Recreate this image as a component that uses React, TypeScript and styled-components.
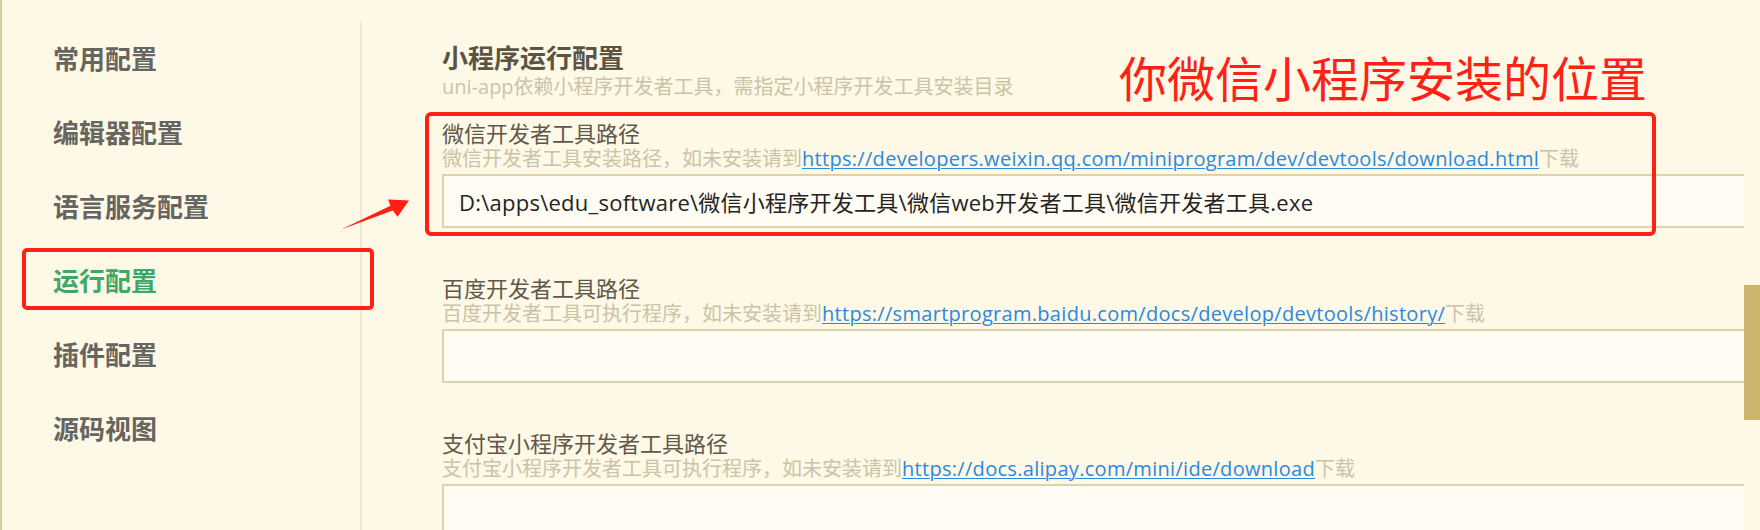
import React from "react";
import styled, { createGlobalStyle } from "styled-components";

const GlobalStyle = createGlobalStyle`
  html, body {
    margin: 0;
    padding: 0;
    background: #fef8e6;
  }
  body {
    font-family: "Open Sans", "Noto Sans CJK SC", sans-serif;
  }
  * { box-sizing: border-box; }
`;

const Page = styled.div`
  position: relative;
  display: flex;
  height: 530px;
  width: 1760px;
  overflow: hidden;
  background: #fef8e6;
  border-left: 2px solid #d9c99b;
`;

const Sidebar = styled.nav`
  flex: 0 0 360px;
  margin-top: 21px;
  border-right: 2px solid #f2e9cf;
  display: flex;
  flex-direction: column;
`;

const NavItem = styled.div<{ $active?: boolean }>`
  position: relative;
  height: 74px;
  line-height: 74px;
  padding-left: 51px;
  font-family: "Noto Sans CJK SC", sans-serif;
  font-size: 26px;
  font-weight: 700;
  color: ${(p) => (p.$active ? "#3fa869" : "#676560")};
`;

const NavMark = styled.span`
  position: absolute;
  left: 20px;
  top: 5px;
  width: 352px;
  height: 62px;
  border: 4px solid #ff2115;
  border-radius: 5px;
  pointer-events: none;
`;

const Content = styled.main`
  flex: 1;
  min-width: 0;
  overflow: hidden;
  padding: 41px 0 0 80px;
`;

const Title = styled.h1`
  margin: 0;
  font-family: "Noto Sans CJK SC", sans-serif;
  font-size: 26px;
  font-weight: 700;
  line-height: 32px;
  color: #5b5444;
`;

const Subtitle = styled.div`
  margin-top: 1px;
  font-size: 20px;
  line-height: 26px;
  color: #cbc3a9;
  white-space: nowrap;
`;

const SectionList = styled.div`
  margin-top: 20px;
  display: flex;
  flex-direction: column;
  gap: 47px;
`;

const Section = styled.section`
  position: relative;
`;

const Label = styled.div`
  font-size: 22px;
  line-height: 26px;
  color: #5e594b;
  white-space: nowrap;
`;

const Desc = styled.div`
  font-size: 20px;
  line-height: 26px;
  color: #cbc3a9;
  white-space: nowrap;
`;

const Link = styled.a`
  color: #2a89e0;
  letter-spacing: 0.3px;
  text-decoration: underline;
  text-decoration-thickness: 1px;
  text-underline-offset: 2px;
`;

const PathInput = styled.input`
  display: block;
  width: 100%;
  height: 54px;
  margin-top: 2px;
  padding: 0 0 0 15px;
  border: 2px solid #dcd2ac;
  border-right: none;
  background: #fffcf3;
  font-family: "Open Sans", "Noto Sans CJK SC", sans-serif;
  font-size: 22px;
  letter-spacing: 0.25px;
  color: #242424;
  outline: none;
`;

const SectionMark = styled.span`
  position: absolute;
  left: -17px;
  top: -8px;
  width: 1231px;
  height: 124px;
  border: 4px solid #ff2115;
  border-radius: 6px;
  pointer-events: none;
`;

const Scrollbar = styled.div`
  flex: 0 0 16px;
  display: flex;
  flex-direction: column;
`;

const Thumb = styled.div`
  margin-top: 285px;
  height: 135px;
  background: #ccb46c;
`;

const Note = styled.div`
  position: absolute;
  left: 1117px;
  top: 52px;
  font-family: "Noto Sans CJK SC", sans-serif;
  font-size: 48px;
  line-height: 48px;
  color: #ff2115;
  white-space: nowrap;
  pointer-events: none;
`;

const Arrow = styled.svg`
  position: absolute;
  left: 328px;
  top: 190px;
  width: 90px;
  height: 45px;
  pointer-events: none;
`;

const navItems = ["常用配置", "编辑器配置", "语言服务配置", "运行配置", "插件配置", "源码视图"];

const sections = [
  {
    label: "微信开发者工具路径",
    desc: "微信开发者工具安装路径，如未安装请到",
    url: "https://developers.weixin.qq.com/miniprogram/dev/devtools/download.html",
    value: "D:\\apps\\edu_software\\微信小程序开发工具\\微信web开发者工具\\微信开发者工具.exe",
    marked: true,
  },
  {
    label: "百度开发者工具路径",
    desc: "百度开发者工具可执行程序，如未安装请到",
    url: "https://smartprogram.baidu.com/docs/develop/devtools/history/",
    value: "",
    marked: false,
  },
  {
    label: "支付宝小程序开发者工具路径",
    desc: "支付宝小程序开发者工具可执行程序，如未安装请到",
    url: "https://docs.alipay.com/mini/ide/download",
    value: "",
    marked: false,
  },
];

export default function App() {
  return (
    <>
      <GlobalStyle />
      <Page>
        <Sidebar>
          {navItems.map((item) => (
            <NavItem key={item} $active={item === "运行配置"}>
              {item}
              {item === "运行配置" && <NavMark />}
            </NavItem>
          ))}
        </Sidebar>
        <Content>
          <Title>小程序运行配置</Title>
          <Subtitle>uni-app依赖小程序开发者工具，需指定小程序开发工具安装目录</Subtitle>
          <SectionList>
            {sections.map((s) => (
              <Section key={s.label}>
                <Label>{s.label}</Label>
                <Desc>
                  {s.desc}
                  <Link href="#">{s.url}</Link>下载
                </Desc>
                <PathInput readOnly value={s.value} />
                {s.marked && <SectionMark />}
              </Section>
            ))}
          </SectionList>
        </Content>
        <Scrollbar>
          <Thumb />
        </Scrollbar>
        <Note>你微信小程序安装的位置</Note>
        <Arrow viewBox="330 190 90 45">
          <polygon
            points="341,229.5 390.5,205.8 388,199.5 409,200.5 397.5,216.8 392.8,210.6"
            fill="#ff2115"
          />
        </Arrow>
      </Page>
    </>
  );
}
